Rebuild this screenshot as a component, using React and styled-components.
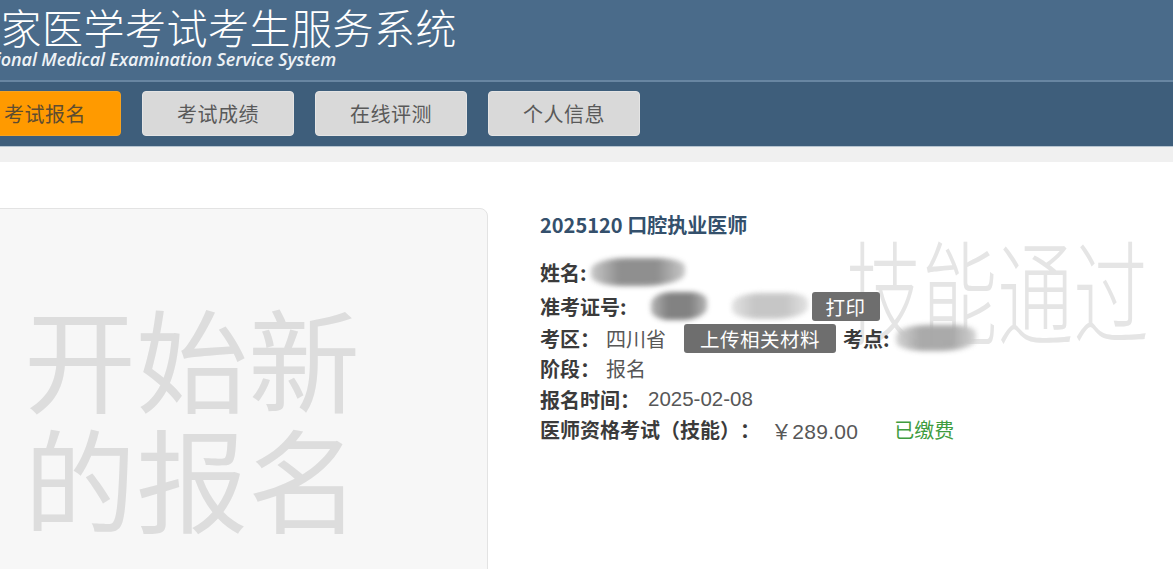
import React from "react";
import styled, { createGlobalStyle } from "styled-components";

const Global = createGlobalStyle`
  html, body { margin: 0; padding: 0; background: #ffffff; overflow: hidden; }
  body {
    font-family: "Noto Sans CJK SC", "Noto Sans", sans-serif;
    text-spacing-trim: space-all;
  }
  * { box-sizing: border-box; }
`;

const Page = styled.div`
  width: 1173px;
  height: 569px;
  overflow: hidden;
  background: #ffffff;
`;

const Header = styled.header`
  height: 82px;
  background: #4a6b8a;
  border-bottom: 2px solid #6886a2;
  padding-top: 4px;
  overflow: hidden;
`;

const Brand = styled.div`
  margin-left: -39px;
  color: #ffffff;
`;

const Title = styled.div`
  font-family: "Noto Sans CJK SC", sans-serif;
  font-weight: 300;
  font-size: 41px;
  line-height: 44px;
  margin-left: -2px;
  white-space: nowrap;
  letter-spacing: 0.5px;
`;

const Subtitle = styled.div`
  font-family: "Open Sans", "Liberation Sans", sans-serif;
  font-style: italic;
  font-weight: 600;
  font-size: 18px;
  line-height: 22px;
  margin-left: 5px;
  color: #eef2f6;
  white-space: nowrap;
  letter-spacing: -0.1px;
`;

const Nav = styled.nav`
  height: 64px;
  background: #3e5e7b;
  display: flex;
  align-items: center;
  gap: 21px;
  margin-left: -31px;
  padding-bottom: 1px;
`;

const NavButton = styled.div`
  width: 152px;
  height: 45px;
  border-radius: 4px;
  display: flex;
  align-items: center;
  justify-content: center;
  font-size: 20px;
  letter-spacing: 0.5px;
  background: ${(p) => (p.$active ? "#ff9a00" : "#d9d9d9")};
  color: ${(p) => (p.$active ? "#5e4c30" : "#595959")};
  border: 1px solid ${(p) => (p.$active ? "#f6a21f" : "#e4e4e4")};
  flex: none;
`;

const Strip = styled.div`
  height: 16px;
  background: #f0f0f0;
  border-top: 1px solid #b6c4d0;
`;

const Main = styled.main`
  display: flex;
  align-items: flex-start;
  padding-top: 46px;
`;

const StartCard = styled.div`
  margin-left: -20px;
  width: 508px;
  height: 420px;
  flex: none;
  background: #f7f7f7;
  border: 1px solid #e3e3e3;
  border-radius: 8px;
  padding: 87px 0 0 43px;
`;

const StartText = styled.div`
  font-size: 112px;
  line-height: 120px;
  font-weight: 400;
  color: #dddddd;
  width: 340px;
`;

const Info = styled.section`
  position: relative;
  margin-left: 52px;
  padding-top: 3px;
  width: 620px;
`;

const ExamTitle = styled.h2`
  margin: 0;
  font-size: 20px;
  line-height: 28px;
  font-weight: 700;
  color: #34506c;
  position: relative;
  z-index: 1;
`;

const Rows = styled.div`
  margin-top: 16px;
  display: flex;
  flex-direction: column;
  position: relative;
  z-index: 1;
`;

const Row = styled.div`
  display: flex;
  align-items: center;
  height: ${(p) => (p.$tall ? "34px" : "30.5px")};
  font-size: 20px;
  white-space: nowrap;
`;

const Label = styled.span`
  font-weight: 700;
  color: #3b3b3b;
  margin-left: ${(p) => p.$ml || 0}px;
`;

const Value = styled.span`
  color: #575757;
  margin-left: ${(p) => p.$ml || 6}px;
`;

const Paid = styled.span`
  color: #3f9c3f;
  margin-left: ${(p) => p.$ml || 0}px;
`;

const Money = styled.span`
  color: #575757;
  margin-left: ${(p) => p.$ml || 0}px;
  font-family: "Liberation Sans", "Noto Sans CJK SC", sans-serif;
  font-size: 21px;
  letter-spacing: 0.3px;
`;

const DateValue = styled.span`
  color: #575757;
  margin-left: ${(p) => p.$ml || 0}px;
  font-family: "Liberation Sans", "Noto Sans CJK SC", sans-serif;
  font-size: 20.5px;
`;

const ActionButton = styled.span`
  display: inline-flex;
  align-items: center;
  justify-content: center;
  height: 29px;
  padding: 0 ${(p) => p.$px || 15}px;
  margin-left: ${(p) => p.$ml || 0}px;
  background: #6e6e6e;
  color: #ffffff;
  border-radius: 3px;
  font-size: 19.5px;
  letter-spacing: 0.5px;
`;

const Smudge = styled.span`
  display: inline-block;
  width: ${(p) => p.$w}px;
  height: ${(p) => p.$h || 26}px;
  margin-left: ${(p) => p.$ml || 0}px;
  border-radius: 40% 30% 45% 35%;
  background: linear-gradient(
    90deg,
    ${(p) => p.$edge} 0%,
    ${(p) => p.$core} 30%,
    ${(p) => p.$core} 70%,
    ${(p) => p.$edge} 100%
  );
  filter: blur(2.5px);
  opacity: 0.95;
`;

const Stamp = styled.div`
  position: absolute;
  left: 306px;
  top: 23px;
  font-size: 113px;
  line-height: 113px;
  font-weight: 300;
  color: #e5e5e5;
  white-space: nowrap;
  transform: scaleX(0.67);
  transform-origin: left top;
  z-index: 0;
  pointer-events: none;
`;

export default function App() {
  return (
    <Page>
      <Global />
      <Header>
        <Brand>
          <Title>国家医学考试考生服务系统</Title>
          <Subtitle>National Medical Examination Service System</Subtitle>
        </Brand>
      </Header>
      <Nav>
        <NavButton $active>考试报名</NavButton>
        <NavButton>考试成绩</NavButton>
        <NavButton>在线评测</NavButton>
        <NavButton>个人信息</NavButton>
      </Nav>
      <Strip />
      <Main>
        <StartCard>
          <StartText>开始新的报名</StartText>
        </StartCard>
        <Info>
          <Stamp>技能通过</Stamp>
          <ExamTitle>2025120 口腔执业医师</ExamTitle>
          <Rows>
            <Row $tall>
              <Label>姓名:</Label>
              <Smudge $w={94} $h={28} $ml={4} $core="#8a8a8a" $edge="#c6c6c6" />
            </Row>
            <Row $tall>
              <Label>准考证号:</Label>
              <Smudge $w={56} $h={28} $ml={24} $core="#7c7c7c" $edge="#b2b2b2" />
              <Smudge $w={76} $h={26} $ml={25} $core="#c4c4c4" $edge="#e0e0e0" />
              <ActionButton $ml={4} $px={14}>打印</ActionButton>
            </Row>
            <Row>
              <Label>考区：</Label>
              <Value>四川省</Value>
              <ActionButton $ml={18} $px={16}>上传相关材料</ActionButton>
              <Label $ml={7}>考点:</Label>
              <Smudge $w={80} $h={26} $ml={6} $core="#a6a6a6" $edge="#d2d2d2" />
            </Row>
            <Row>
              <Label>阶段：</Label>
              <Value>报名</Value>
            </Row>
            <Row>
              <Label>报名时间：</Label>
              <DateValue $ml={8}>2025-02-08</DateValue>
            </Row>
            <Row>
              <Label>医师资格考试（技能）：</Label>
              <Money $ml={11}>￥289.00</Money>
              <Paid $ml={36}>已缴费</Paid>
            </Row>
          </Rows>
        </Info>
      </Main>
    </Page>
  );
}
